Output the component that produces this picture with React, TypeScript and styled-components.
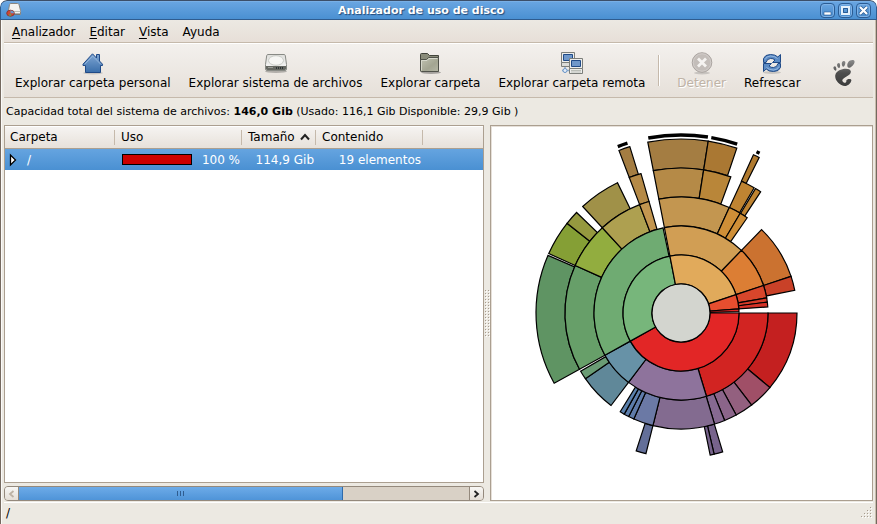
import React from "react";
import styled, { createGlobalStyle, css } from "styled-components";
import { SiGnome } from "react-icons/si";

const GlobalStyle = createGlobalStyle`
  *, *::before, *::after { box-sizing: border-box; }
  html, body { margin: 0; background: #fff; }
  body { font-family: "DejaVu Sans", sans-serif; font-size: 12px; color: #000; }
  button, table { font: inherit; color: inherit; }
`;

const Window = styled.div`
  min-height: 100vh;
  display: flex;
  flex-direction: column;
  overflow: hidden;
  background: #ece9e2;
  border-radius: 7px 7px 0 0;
`;

const TitleBar = styled.header`
  display: grid;
  grid-template-columns: auto 1fr auto;
  align-items: center;
  height: 20px;
  padding: 0 5px;
  border: 1px solid #2f5c8f;
  border-top-color: #3c4f69;
  border-radius: 7px 7px 0 0;
  background: linear-gradient(#6aa6e2, #4a90d2);
  box-shadow: inset 0 1px 0 #78afe6;
`;

const Title = styled.h1`
  margin: 0;
  padding-top: 1px;
  color: #fff;
  font-size: 11px;
  font-weight: bold;
  line-height: 17px;
  text-align: center;
  text-shadow: 1px 1px 1px #234a78;
`;

const TitleButtons = styled.div`
  display: flex;
  justify-content: flex-end;
  gap: 3px;
`;

const TitleButton = styled.button`
  width: 15px;
  height: 15px;
  padding: 0;
  border: 1px solid #2b5c94;
  border-radius: 4px;
  background: linear-gradient(#6aa6e2, #4587c8);
  box-shadow: inset 0 0 0 1px #7fb2e6;
  svg { display: block; }
`;

const Frame = styled.div`
  flex: 1;
  display: flex;
  flex-direction: column;
  padding: 0 3px;
  border: 1px solid #74695f;
  border-top: 0;
  box-shadow: inset 1px 0 0 #fbfaf8, inset -1px -1px 0 #c9bdad;
`;

const MenuBar = styled.nav`
  display: flex;
  height: 23px;
  padding: 0 1px;
  background: linear-gradient(#ece9e3, #e7dfd8);
  border-bottom: 1px solid #c5b9ab;
`;

const MenuItem = styled.button`
  padding: 1px 7px 0;
  border: 0;
  background: none;
  line-height: 22px;
  text-underline-offset: 2px;
`;

const ToolBar = styled.div`
  display: flex;
  align-items: stretch;
  height: 55px;
  padding: 0 2px;
  border-top: 1px solid #fff;
  border-bottom: 1px solid #c5b9ab;
  background: linear-gradient(#f3f0ed, #e6e0d9);
`;

const Tool = styled.button`
  display: flex;
  flex-direction: column;
  align-items: center;
  padding: 8px 9px 0;
  border: 0;
  background: none;
  line-height: 15px;
  white-space: nowrap;
  svg { display: block; flex: none; }
  &:disabled { color: #bfb3a6; text-shadow: 1px 1px 0 #fff; }
`;

const Separator = styled.div`
  width: 2px;
  margin: 11px 8px 11px 4px;
  border-left: 1px solid #c5b9ab;
  border-right: 1px solid #fff;
`;

const Brand = styled.div`
  margin: 16px 14px 0 auto;
  svg { display: block; }
`;

const Capacity = styled.p`
  margin: 0;
  height: 27px;
  padding: 0 2px;
  font-size: 11px;
  line-height: 27px;
  white-space: nowrap;
`;

const Panes = styled.main`
  flex: 1;
  display: grid;
  grid-template-columns: minmax(0, 480fr) 6px minmax(0, 383fr);
`;

const TreePane = styled.section`
  display: flex;
  flex-direction: column;
  gap: 3px;
`;

const TreeBox = styled.div`
  flex: 1;
  border: 1px solid #ab9f90;
  background: #fff;
  overflow: hidden;
`;

const TreeTable = styled.table`
  width: 100%;
  table-layout: fixed;
  border-collapse: separate;
  border-spacing: 0;
`;

const HeadCell = styled.th<{ $width?: number }>`
  ${(p) => p.$width && css`width: ${p.$width}px;`}
  height: 23px;
  padding: 0 5px;
  background:
    linear-gradient(#c5b9ab, #c5b9ab) right 1px center / 1px 15px no-repeat,
    linear-gradient(#f6f4f2, #e7e1da);
  border-bottom: 1px solid #ab9f90;
  box-shadow: inset 0 1px 0 #fff;
  font-weight: normal;
  text-align: left;
  white-space: nowrap;
  &:last-child { background: linear-gradient(#f6f4f2, #e7e1da); }
  svg { margin-left: 1px; }
`;

const BodyRow = styled.tr`
  height: 21px;
  color: #fff;
`;

const Cell = styled.td<{ $right?: boolean }>`
  padding: 0 3px;
  background: linear-gradient(#65a4e0, #4a90d2);
  text-align: ${(p) => (p.$right ? "right" : "left")};
  white-space: nowrap;
`;

const CellLine = styled.div`
  display: flex;
  align-items: center;
  gap: 9px;
`;

const UsageLine = styled.div`
  display: flex;
  align-items: center;
  justify-content: space-between;
  padding-left: 3px;
`;

const UsageBar = styled.div`
  width: 70px;
  height: 11px;
  border: 1px solid #000;
  background: #fff;
`;

const UsageFill = styled.div`
  height: 100%;
  background: #cc0000;
`;

const ScrollBar = styled.div`
  display: flex;
  height: 15px;
  border: 1px solid #94897c;
  border-radius: 4px;
  background: #d9d1c6;
  overflow: hidden;
`;

const ScrollButton = styled.button`
  flex: none;
  display: grid;
  place-items: center;
  width: 14px;
  padding: 0;
  border: 0;
  background: linear-gradient(#f8f7f5, #e4ded6);
  &:first-child { border-right: 1px solid #94897c; }
  &:last-child { border-left: 1px solid #94897c; }
`;

const ScrollTrack = styled.div`
  flex: 1;
`;

const ScrollThumb = styled.div`
  display: flex;
  align-items: center;
  justify-content: center;
  gap: 2px;
  width: 72%;
  height: 13px;
  border-right: 1px solid #2f6bab;
  background: linear-gradient(#6dabe8, #4f94d8);
`;

const ThumbNotch = styled.span`
  width: 1px;
  height: 5px;
  background: #2f5c8f;
`;

const Splitter = styled.div`
  display: grid;
  place-items: center;
`;

const ChartPane = styled.section`
  display: flex;
  align-items: center;
  justify-content: center;
  border: 1px solid #ab9f90;
  background: #fff;
  box-shadow: inset 1px 1px 0 #e6e0d9;
  overflow: hidden;
  svg { display: block; flex: none; }
`;

const StatusBar = styled.footer`
  display: flex;
  align-items: center;
  justify-content: space-between;
  height: 23px;
  margin-top: 1px;
  padding: 0 1px 3px 2px;
  border-top: 1px solid #fff;
`;

/* level, start angle, end angle, fill; degrees clockwise from three o'clock */
type Slice = [number, number, number, string];

const slices: Slice[] = [
  [5, 259, 279, "#a47d42"],
  [5, 279, 288.7, "#aa7833"],
  [5, 294.6, 296.7, "#b07a2f"],
  [5, 249.1, 252.9, "#a47d42"],
  [4, 151, 203.4, "#5f9463"],
  [4, 204.2, 218.2, "#859f35"],
  [4, 218.2, 223.9, "#95993f"],
  [4, 227.3, 244, "#a09148"],
  [4, 249.1, 254, "#b58a47"],
  [4, 259, 279, "#b58a47"],
  [4, 279, 290.1, "#b98639"],
  [4, 294.7, 300.3, "#bf8432"],
  [4, 300.9, 303.3, "#bf8432"],
  [4, 104, 108, "#636f99"],
  [4, 73.3, 76.8, "#77638c"],
  [4, 76.8, 78.4, "#77638c"],
  [3, 0, 40, "#c42020"],
  [3, 40, 52.5, "#a04f67"],
  [3, 52.5, 61.6, "#93607f"],
  [3, 61.6, 67.9, "#8b658a"],
  [3, 67.9, 73.2, "#866991"],
  [3, 73.2, 104, "#836b90"],
  [3, 104, 114, "#6b79a5"],
  [3, 114, 116.8, "#5f7ba9"],
  [3, 116.8, 119.3, "#5c7dab"],
  [3, 119.3, 121.6, "#5a80ac"],
  [3, 127.1, 145.5, "#608899"],
  [3, 145.5, 149.9, "#6a9c74"],
  [3, 151, 204.2, "#679f69"],
  [3, 204.2, 227.3, "#92ad3f"],
  [3, 227.3, 249.1, "#aea050"],
  [3, 249.1, 254, "#c39650"],
  [3, 259, 294.6, "#c39650"],
  [3, 294.6, 300.7, "#cf8f37"],
  [3, 300.7, 304.8, "#cf8f37"],
  [3, 314, 341.6, "#cb7230"],
  [3, 341.6, 348.7, "#c94128"],
  [2, 0, 73, "#d22422"],
  [2, 73, 127.1, "#8e739c"],
  [2, 127.1, 151, "#6792a7"],
  [2, 151, 258.1, "#6fab72"],
  [2, 259, 314, "#d19e54"],
  [2, 314, 341.6, "#dc7e34"],
  [2, 341.6, 350, "#d8462b"],
  [2, 350, 352.8, "#d63b29"],
  [2, 352.8, 356, "#d43228"],
  [1, 0, 151, "#e22626"],
  [1, 151, 259, "#77b67b"],
  [1, 259, 341.6, "#e1aa5b"],
  [1, 341.6, 356, "#e74e2f"],
  [1, 356, 358.7, "#e22626"],
];

/* start and end angle of the marks for folders that hold deeper levels */
const caps: [number, number][] = [
  [259.4, 278.7],
  [279.8, 288.4],
  [249.2, 252.5],
  [295.1, 296.2],
];

const RING = 29;

function point(radius: number, degrees: number) {
  const a = (degrees * Math.PI) / 180;
  return `${(radius * Math.cos(a)).toFixed(2)} ${(radius * Math.sin(a)).toFixed(2)}`;
}

function slicePath([level, from, to]: Slice) {
  const inner = level * RING;
  const outer = inner + RING;
  const large = to - from > 180 ? 1 : 0;
  return `M${point(inner, from)} L${point(outer, from)} A${outer} ${outer} 0 ${large} 1 ${point(outer, to)} L${point(inner, to)} A${inner} ${inner} 0 ${large} 0 ${point(inner, from)} Z`;
}

function RingsChart() {
  return (
    <svg width="381" height="374" viewBox="-190 -187 381 374" role="img" aria-label="Uso de disco por carpeta">
      <g stroke="#000" strokeWidth="1.2">
        {slices.map((s, i) => (
          <path key={i} d={slicePath(s)} fill={s[3]} />
        ))}
        <circle r={RING} fill="#d3d5cf" />
      </g>
      <g stroke="#000" strokeWidth="3.4" fill="none">
        {caps.map(([from, to]) => (
          <path key={from} d={`M${point(178, from)} A178 178 0 0 1 ${point(178, to)}`} />
        ))}
      </g>
    </svg>
  );
}

function DiskChartIcon() {
  return (
    <svg width="16" height="16" viewBox="0 0 16 16" aria-hidden="true">
      <path d="M3.500 2.500Q4 1.500 5 1.500H11.500Q12.500 1.500 13 2.500L14.500 8.500V12.500H2.500V8.500Z" fill="#f3f3f1" stroke="#8a8680" />
      <path d="M3 9.500H14.500" stroke="#babdb6" />
      <path d="M8 12h6" stroke="#666" />
      <ellipse cx="4.500" cy="11.200" rx="3.800" ry="3" fill="#cf4634" stroke="#8d3a34" />
      <path d="M4.500 11.200V8.500A3.500 2.700 0 0 1 8 11.200Z" fill="#6d98c9" />
      <path d="M4.500 11.200L2.500 13.200A3.500 2.700 0 0 0 5.500 13.800Z" fill="#6fa04d" />
    </svg>
  );
}

function HomeIcon() {
  return (
    <svg width="24" height="24" viewBox="0 0 24 24" aria-hidden="true">
      <defs>
        <linearGradient id="home" x1="0" y1="0" x2="0" y2="1">
          <stop offset="0" stopColor="#7fa6d3" />
          <stop offset="1" stopColor="#3a6eaa" />
        </linearGradient>
      </defs>
      <ellipse cx="12" cy="21" rx="10" ry="1.5" fill="#000" opacity=".15" />
      <path d="M11.5 1.8 L15.5 6 V2.5 H18.5 V9 L21.5 12.2 V13.5 H19.5 V20.5 H4.5 V13.5 H2 V12.2Z" fill="url(#home)" stroke="#204a87" strokeLinejoin="round" />
      <path d="M3.8 12.3 L11.7 4 L19.8 12.3" fill="none" stroke="#9dbce0" strokeWidth=".8" />
    </svg>
  );
}

function DriveIcon() {
  return (
    <svg width="24" height="24" viewBox="0 0 24 24" aria-hidden="true">
      <defs>
        <linearGradient id="drive" x1="0" y1="0" x2="0" y2="1">
          <stop offset="0" stopColor="#dededb" />
          <stop offset="1" stopColor="#fafafa" />
        </linearGradient>
      </defs>
      <ellipse cx="12" cy="19.500" rx="11" ry="1.5" fill="#000" opacity=".25" />
      <path d="M4 2.500H20Q21 2.500 21.300 3.500L22.500 12.500V17Q22.500 18.500 21 18.500H3Q1.500 18.500 1.500 17V12.500L2.700 3.500Q3 2.500 4 2.500Z" fill="url(#drive)" stroke="#888a85" />
      <path d="M2 14H22V16.500Q22 18 20.500 18H3.500Q2 18 2 16.500Z" fill="#666862" />
      <ellipse cx="12" cy="8.500" rx="7.500" ry="4.800" fill="#f6f6f4" stroke="#c8cac5" />
      <path d="M4 15.500h5" stroke="#9a9c96" />
      <path d="M12 16h8" stroke="#2e3436" strokeWidth="2" strokeDasharray="1 1" />
    </svg>
  );
}

function FolderIcon() {
  return (
    <svg width="24" height="24" viewBox="0 0 24 24" aria-hidden="true">
      <defs>
        <linearGradient id="folder" x1="0" y1="0" x2="1" y2="1">
          <stop offset="0" stopColor="#c3c5b4" />
          <stop offset=".6" stopColor="#a3a592" />
          <stop offset="1" stopColor="#b4b6a5" />
        </linearGradient>
      </defs>
      <ellipse cx="13" cy="20.500" rx="10" ry="1.500" fill="#000" opacity=".3" />
      <path d="M2.500 19V2.500Q2.500 1.500 3.500 1.500H9.500L11.500 3.500H20.500V19Z" fill="#898b79" stroke="#42443b" />
      <path d="M3.500 19.500Q2.500 19.500 2.500 18.500V7.500H8.500L10.500 5.500H20.500V19.500Z" fill="url(#folder)" stroke="#50524a" />
      <path d="M3.500 18.500V8.500H9L11 6.500H19.500" fill="none" stroke="#d6d8cb" />
    </svg>
  );
}

function NetworkIcon() {
  return (
    <svg width="24" height="24" viewBox="0 0 24 24" aria-hidden="true">
      <g stroke="#7c7e7a">
        <path d="M1.500 .500H14.500V10.500H1.500Z" fill="#eeeeec" />
        <path d="M3.500 2.500H12.500V8.500H3.500Z" fill="#6f97ca" stroke="#204a87" />
        <path d="M1.500 10.500H12.500V14.500H1.500Z" fill="#dcdcd8" />
        <path d="M9.500 6.500H22.500V16.500H9.500Z" fill="#eeeeec" />
        <path d="M11.500 8.500H20.500V14.500H11.500Z" fill="#6f97ca" stroke="#204a87" />
        <path d="M9.500 16.500H22.500V21.500H9.500Z" fill="#eeeeec" />
      </g>
      <path d="M11 18.500h10M11 20h10" stroke="#babdb6" />
      <path d="M2 18.500h7M5 15v6" stroke="#8daccf" strokeWidth="1.500" />
      <circle cx="5" cy="18.500" r="2" fill="#e4edf7" stroke="#6b96c8" />
    </svg>
  );
}

function StopIcon() {
  return (
    <svg width="24" height="24" viewBox="0 0 24 24" aria-hidden="true">
      <ellipse cx="12" cy="21" rx="8" ry="1.500" fill="#000" opacity=".15" />
      <circle cx="12" cy="10.500" r="9.800" fill="#c3bdb9" stroke="#aaa4a0" />
      <circle cx="12" cy="10.500" r="8.700" fill="none" stroke="#d1ccc9" />
      <path d="M8 6.500 L16 14.500 M16 6.500 L8 14.500" stroke="#f5f3f1" strokeWidth="2.800" />
    </svg>
  );
}

function RefreshIcon() {
  return (
    <svg width="24" height="24" viewBox="0 0 24 24" aria-hidden="true">
      <ellipse cx="12" cy="20.500" rx="9" ry="1.500" fill="#000" opacity=".15" />
      <g fill="#5c8bc4" stroke="#204a87" strokeLinejoin="round">
        <path d="M3.500 10.500V6.500Q5 2.500 10.500 2.500Q15.500 2.500 17.800 5L20.500 2.500V10.500H12.500L15 8Q13 6.200 10.500 6.500Q7 6.500 6 10.500Z" />
        <path d="M20.500 11.500V15.500Q19 19.500 13.500 19.500Q8.500 19.500 6.200 17L3.500 19.500V11.500H11.500L9 14Q11 15.800 13.500 15.500Q17 15.500 18 11.500Z" />
      </g>
      <path d="M5 7.500Q6.500 4 10.500 4Q15 4 17.500 6.500M19 14.500Q17.500 18 13.500 18Q9 18 6.500 15.500" fill="none" stroke="#a3c1e5" strokeWidth=".8" />
    </svg>
  );
}

function FootIcon() {
  return (
    <>
      <svg width="0" height="0" aria-hidden="true">
        <defs>
          <linearGradient id="foot" x1="0" y1="0" x2="0" y2="1">
            <stop offset="0" stopColor="#8b8b8b" />
            <stop offset=".5" stopColor="#4e4e4e" />
            <stop offset="1" stopColor="#3c3c3c" />
          </linearGradient>
        </defs>
      </svg>
      <SiGnome size={26} fill="url(#foot)" stroke="none" title="GNOME" />
    </>
  );
}

function Dots({ cells, width, height }: { cells: [number, number][]; width: number; height: number }) {
  return (
    <svg width={width} height={height} viewBox={`0 0 ${width} ${height}`} aria-hidden="true" shapeRendering="crispEdges">
      {cells.map(([x, y]) => (
        <g key={`${x}-${y}`}>
          <path d={`M${x + 1} ${y + 1}h1v1h-1z`} fill="#fff" />
          <path d={`M${x} ${y}h1v1h-1z`} fill="#a69b8d" />
        </g>
      ))}
    </svg>
  );
}

const splitDots: [number, number][] = Array.from({ length: 16 }, (_, i) => [[0, i * 3], [3, i * 3]] as [number, number][]).flat();
const gripDots: [number, number][] = [0, 1, 2, 3].flatMap((r) =>
  Array.from({ length: r + 1 }, (_, i) => [9 - i * 3, r * 3] as [number, number])
);

const menus = ["Analizador", "Editar", "Vista"];

export default function App() {
  return (
    <>
      <GlobalStyle />
      <Window>
        <TitleBar>
          <DiskChartIcon />
          <Title>Analizador de uso de disco</Title>
          <TitleButtons>
            <TitleButton aria-label="Minimizar">
              <svg width="13" height="13"><path d="M3 8h7v3H3z" fill="#fff" stroke="#2b5c94" strokeWidth=".6" /></svg>
            </TitleButton>
            <TitleButton aria-label="Maximizar">
              <svg width="13" height="13">
                <path d="M3 3h7v7H3z" fill="none" stroke="#e4f0fb" strokeWidth="2" />
                <path d="M4.500 4.500h4v4h-4z" fill="none" stroke="#2b5c94" />
              </svg>
            </TitleButton>
            <TitleButton aria-label="Cerrar">
              <svg width="13" height="13">
                <path d="M3 3l7 7M10 3l-7 7" stroke="#2b5c94" strokeWidth="3.600" />
                <path d="M3 3l7 7M10 3l-7 7" stroke="#fff" strokeWidth="2.200" />
              </svg>
            </TitleButton>
          </TitleButtons>
        </TitleBar>
        <Frame>
          <MenuBar aria-label="Menú principal">
            {menus.map((m) => (
              <MenuItem key={m}><u>{m[0]}</u>{m.slice(1)}</MenuItem>
            ))}
            <MenuItem>Ayuda</MenuItem>
          </MenuBar>
          <ToolBar role="toolbar">
            <Tool><HomeIcon />Explorar carpeta personal</Tool>
            <Tool><DriveIcon />Explorar sistema de archivos</Tool>
            <Tool><FolderIcon />Explorar carpeta</Tool>
            <Tool><NetworkIcon />Explorar carpeta remota</Tool>
            <Separator />
            <Tool disabled><StopIcon />Detener</Tool>
            <Tool><RefreshIcon />Refrescar</Tool>
            <Brand><FootIcon /></Brand>
          </ToolBar>
          <Capacity>
            Capacidad total del sistema de archivos: <b>146,0 Gib</b> (Usado: 116,1 Gib Disponible: 29,9 Gib )
          </Capacity>
          <Panes>
            <TreePane>
              <TreeBox>
                <TreeTable>
                  <thead>
                    <tr>
                      <HeadCell $width={111}>Carpeta</HeadCell>
                      <HeadCell $width={127}>Uso</HeadCell>
                      <HeadCell $width={74} aria-sort="ascending">
                        Tamaño{" "}
                        <svg width="10" height="8" viewBox="0 0 10 8" aria-hidden="true">
                          <path d="M1 6.500L5 2L9 6.500" fill="none" stroke="#222" strokeWidth="2" />
                        </svg>
                      </HeadCell>
                      <HeadCell $width={107}>Contenido</HeadCell>
                      <HeadCell aria-label="Relleno" />
                    </tr>
                  </thead>
                  <tbody>
                    <BodyRow>
                      <Cell>
                        <CellLine>
                          <svg width="10" height="14" viewBox="0 0 10 14" aria-hidden="true">
                            <path d="M2.500 2V12L7.500 7Z" fill="#fff" stroke="#000" strokeWidth="1.300" />
                          </svg>
                          /
                        </CellLine>
                      </Cell>
                      <Cell>
                        <UsageLine>
                          <UsageBar><UsageFill /></UsageBar>
                          100 %
                        </UsageLine>
                      </Cell>
                      <Cell $right>114,9 Gib</Cell>
                      <Cell $right>19 elementos</Cell>
                      <Cell />
                    </BodyRow>
                  </tbody>
                </TreeTable>
              </TreeBox>
              <ScrollBar>
                <ScrollButton aria-label="Desplazar a la izquierda" disabled>
                  <svg width="7" height="8"><path d="M5.500 1L2 4L5.500 7" fill="none" stroke="#bdb2a4" strokeWidth="1.800" /></svg>
                </ScrollButton>
                <ScrollTrack>
                  <ScrollThumb><ThumbNotch /><ThumbNotch /><ThumbNotch /></ScrollThumb>
                </ScrollTrack>
                <ScrollButton aria-label="Desplazar a la derecha">
                  <svg width="7" height="8"><path d="M1.500 1L5 4L1.500 7" fill="none" stroke="#222" strokeWidth="1.800" /></svg>
                </ScrollButton>
              </ScrollBar>
            </TreePane>
            <Splitter><Dots cells={splitDots} width={5} height={47} /></Splitter>
            <ChartPane><RingsChart /></ChartPane>
          </Panes>
          <StatusBar>
            <span>/</span>
            <Dots cells={gripDots} width={11} height={11} />
          </StatusBar>
        </Frame>
      </Window>
    </>
  );
}
